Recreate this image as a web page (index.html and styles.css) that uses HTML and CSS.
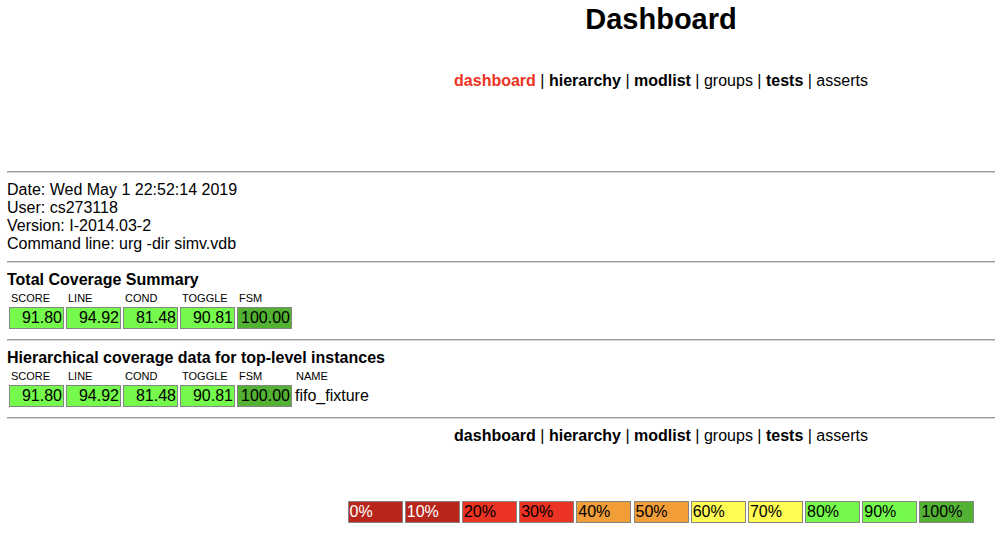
FILE: index.html
```html
<!DOCTYPE html>
<html>
<head>
<meta charset="utf-8">
<title>Dashboard</title>
<link rel="stylesheet" href="styles.css">
</head>
<body>
<div class="center-col">
  <h1 class="title">Dashboard</h1>
  <div class="nav nav-top">
    <span class="b cur">dashboard</span> | <span class="b">hierarchy</span> | <span class="b">modlist</span> | <span>groups</span> | <span class="b">tests</span> | <span>asserts</span>
  </div>
</div>
<hr class="rule rule-first">
<div class="info">
  <div>Date: Wed May 1 22:52:14 2019</div>
  <div>User: cs273118</div>
  <div>Version: I-2014.03-2</div>
  <div>Command line: urg -dir simv.vdb</div>
</div>
<hr class="rule">
<div class="section">
  <div class="sec-title">Total Coverage Summary</div>
  <div class="grid labels">
    <div>SCORE</div><div>LINE</div><div>COND</div><div>TOGGLE</div><div>FSM</div>
  </div>
  <div class="grid cells">
    <div class="cell g">91.80</div>
    <div class="cell g">94.92</div>
    <div class="cell g">81.48</div>
    <div class="cell g">90.81</div>
    <div class="cell dg">100.00</div>
  </div>
</div>
<hr class="rule rule-after">
<div class="section">
  <div class="sec-title">Hierarchical coverage data for top-level instances</div>
  <div class="grid labels">
    <div>SCORE</div><div>LINE</div><div>COND</div><div>TOGGLE</div><div>FSM</div><div>NAME</div>
  </div>
  <div class="grid cells">
    <div class="cell g">91.80</div>
    <div class="cell g">94.92</div>
    <div class="cell g">81.48</div>
    <div class="cell g">90.81</div>
    <div class="cell dg">100.00</div>
    <div class="name">fifo_fixture</div>
  </div>
</div>
<hr class="rule rule-after">
<div class="center-col">
  <div class="nav">
    <span class="b">dashboard</span> | <span class="b">hierarchy</span> | <span class="b">modlist</span> | <span>groups</span> | <span class="b">tests</span> | <span>asserts</span>
  </div>
  <div class="legend">
    <div class="lg c0">0%</div>
    <div class="lg c0">10%</div>
    <div class="lg c2">20%</div>
    <div class="lg c2">30%</div>
    <div class="lg c4">40%</div>
    <div class="lg c4">50%</div>
    <div class="lg c6">60%</div>
    <div class="lg c6">70%</div>
    <div class="lg c8">80%</div>
    <div class="lg c8">90%</div>
    <div class="lg c10">100%</div>
  </div>
</div>
</body>
</html>
```

FILE: styles.css
```css
html, body {
  margin: 0;
  padding: 0;
  background: #ffffff;
}
body {
  padding-left: 7px;
  font-family: "Liberation Sans", Arial, Helvetica, sans-serif;
  font-size: 16px;
  line-height: 18px;
  color: #000;
}
.center-col {
  padding-left: 320px;
  text-align: center;
}
.title {
  margin: 2px 0 0;
  font-size: 29px;
  line-height: 34px;
  font-weight: bold;
}
.nav {
  line-height: 18px;
}
.nav-top {
  margin-top: 36px;
}
.b { font-weight: bold; }
.cur { color: #eb3323; }

.rule {
  height: 0;
  margin: 8px 0;
  border: none;
  border-top: 1px solid #9a9a9a;
  border-bottom: 1px solid #d4d4d4;
}
.rule-first { margin-top: 81px; }
.rule-after { margin-top: 10px; }

.sec-title {
  font-weight: bold;
}
.grid {
  display: grid;
  grid-template-columns: repeat(5, 55px) auto;
  column-gap: 2px;
  justify-content: start;
  margin-left: 2px;
}
.labels {
  margin-top: 2px;
  font-size: 11px;
  line-height: 14px;
}
.labels > div {
  padding-left: 2px;
}
.cells {
  margin-top: 2px;
}
.cell {
  border: 1px solid #858585;
  line-height: 20px;
  text-align: right;
  padding-right: 1px;
}
.g { background: #75f94c; }
.dg { background: #53b233; }
.name {
  line-height: 22px;
  padding-left: 1px;
}

.legend {
  margin-top: 56px;
  display: flex;
  justify-content: center;
  gap: 2.2px;
}
.lg {
  width: 52px;
  border: 1px solid #858585;
  line-height: 20px;
  text-align: left;
  padding-left: 1px;
}
.c0 { background: #b8261b; color: #fff; }
.c2 { background: #eb3323; }
.c4 { background: #f19d38; }
.c6 { background: #fffc54; }
.c8 { background: #75f94c; }
.c10 { background: #53b233; }
```
